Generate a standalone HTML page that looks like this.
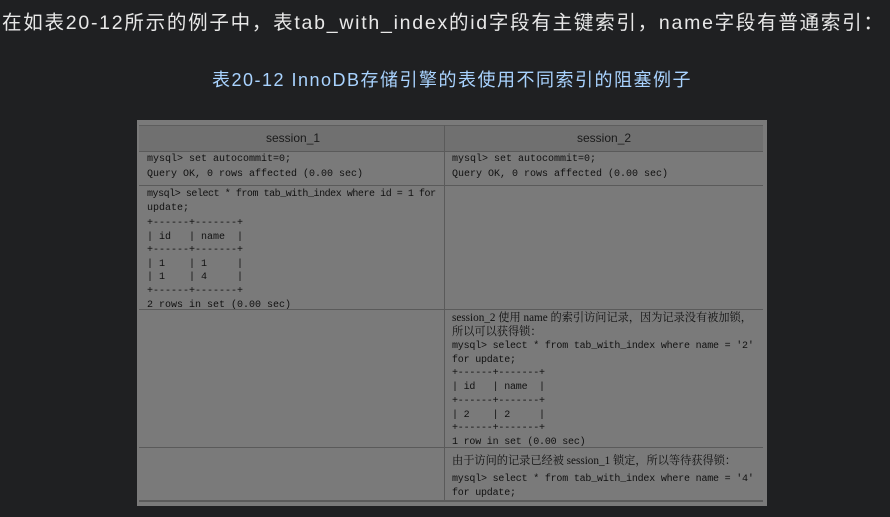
<!DOCTYPE html>
<html><head><meta charset="utf-8"><style>
body{margin:0;width:890px;height:517px;background:#1f2022;position:relative;overflow:hidden;font-family:"Liberation Sans","Noto Sans CJK SC",sans-serif}
.t1{position:absolute;left:2px;top:6px;font-size:19.5px;color:#e8e8e8;white-space:nowrap;letter-spacing:1.75px}
.t2{position:absolute;left:0;width:904px;top:66px;text-align:center;font-size:18px;color:#a9d3ff;white-space:nowrap;letter-spacing:1.5px}
.img{position:absolute;left:137px;top:120px;width:630px;height:386px;background:#7a7a7a}
.hd{position:absolute;left:2px;top:5px;width:624px;height:25px;background:#707070;border-bottom:1px solid #5a5a5a;border-top:1px solid #5e5e5e}
.h{position:absolute;top:11px;font-size:12px;color:#1a1a1a}
.hl{position:absolute;height:1px;background:#5a5a5a;left:2px;width:624px}
.vl{position:absolute;width:1px;background:#5a5a5a;left:307px;top:5px;height:376px}
.m{position:absolute;font-family:"Liberation Mono",monospace;font-size:10px;color:#111;white-space:pre;line-height:12px}
.c{position:absolute;font-family:"Liberation Serif","Noto Serif CJK SC",serif;font-size:11.2px;color:#111;white-space:nowrap;line-height:12px}
</style></head><body>
<div class="t1">在如表20-12所示的例子中，表tab_with_index的id字段有主键索引，name字段有普通索引：</div>
<div class="t2">表20-12 InnoDB存储引擎的表使用不同索引的阻塞例子</div>
<div class="img">
<div class="hd"></div>
<div class="h" style="left:129px">session_1</div>
<div class="h" style="left:440px">session_2</div>
<div class="hl" style="top:65px"></div>
<div class="hl" style="top:189px"></div>
<div class="hl" style="top:327px"></div>
<div class="hl" style="top:380px;height:2px"></div>
<div class="vl"></div>
<div class="m" style="left:10px;top:34px">mysql&gt; set autocommit=0;</div>
<div class="m" style="left:10px;top:49px">Query OK, 0 rows affected (0.00 sec)</div>
<div class="m" style="left:315px;top:34px">mysql&gt; set autocommit=0;</div>
<div class="m" style="left:315px;top:49px">Query OK, 0 rows affected (0.00 sec)</div>
<div class="m" style="left:10px;top:69px;letter-spacing:-0.45px">mysql&gt; select * from tab_with_index where id = 1 for</div>
<div class="m" style="left:10px;top:83px">update;</div>
<div class="m" style="left:10px;top:97px;line-height:13.6px">+------+-------+
| id   | name  |
+------+-------+
| 1    | 1     |
| 1    | 4     |
+------+-------+
2 rows in set (0.00 sec)</div>
<div class="c" style="left:315px;top:192px">session_2 使用 name 的索引访问记录，因为记录没有被加锁，</div>
<div class="c" style="left:315px;top:206px">所以可以获得锁：</div>
<div class="m" style="left:315px;top:220px;line-height:13.7px;letter-spacing:-0.2px">mysql&gt; select * from tab_with_index where name = '2'
for update;
+------+-------+
| id   | name  |
+------+-------+
| 2    | 2     |
+------+-------+
1 row in set (0.00 sec)</div>
<div class="c" style="left:315px;top:335px">由于访问的记录已经被 session_1 锁定，所以等待获得锁：</div>
<div class="m" style="left:315px;top:353px;line-height:14px;letter-spacing:-0.2px">mysql&gt; select * from tab_with_index where name = '4'
for update;</div>
</div>
</body></html>
